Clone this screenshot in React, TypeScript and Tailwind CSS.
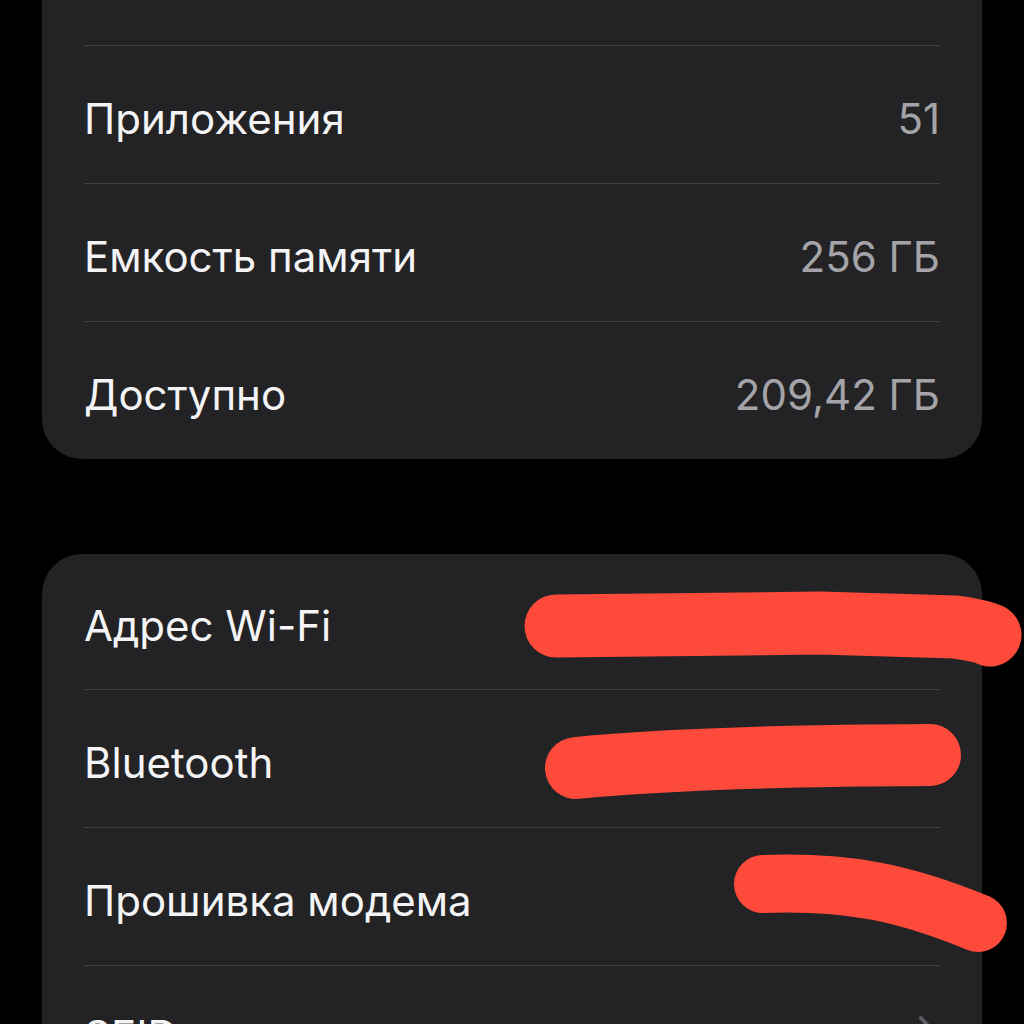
import React from "react";

const font = { fontFamily: "Inter, 'Noto Sans', 'Liberation Sans', sans-serif" };

type Row = { label: string; value?: string; chevron?: boolean };

const storage: Row[] = [
  { label: "Приложения", value: "51" },
  { label: "Емкость памяти", value: "256 ГБ" },
  { label: "Доступно", value: "209,42 ГБ" },
];

const network: Row[] = [
  { label: "Адрес Wi-Fi" },
  { label: "Bluetooth" },
  { label: "Прошивка модема" },
  { label: "SEID", chevron: true },
];

const RowItem = ({ row, first }: { row: Row; first?: boolean }) => (
  <div
    className={
      first
        ? "flex h-[135px] items-center justify-between pt-[8px]"
        : row.chevron
          ? "flex h-[138px] items-center justify-between border-t border-[#424245] pt-[2px]"
          : "flex h-[138px] items-center justify-between border-t border-[#424245] pt-[8px]"
    }
  >
    <span className="text-[42px] leading-none text-[#f4f4f6]">{row.label}</span>
    {row.value && (
      <span className="text-[42px] leading-none text-[#a3a3a8]">{row.value}</span>
    )}
    {row.chevron && (
      <svg width="16" height="28" viewBox="0 0 16 28" className="mb-[14px] mr-[6px]">
        <path
          d="M3 3 L13 14 L3 25"
          fill="none"
          stroke="#5c5c60"
          strokeWidth="4"
          strokeLinecap="round"
          strokeLinejoin="round"
        />
      </svg>
    )}
  </div>
);

const App = () => {
  return (
    <div className="relative h-[1024px] w-[1024px] overflow-hidden bg-black" style={font}>
      <div className="mx-[42px] rounded-b-[40px] bg-[#232325] px-[42px]">
        <div className="h-[45px]" />
        {storage.map((r) => (
          <RowItem key={r.label} row={r} />
        ))}
      </div>

      <div className="mx-[42px] mt-[95px] rounded-t-[40px] bg-[#232325] px-[42px]">
        {network.map((r, i) => (
          <RowItem key={r.label} row={r} first={i === 0} />
        ))}
      </div>

      {/* red marker scribbles over hidden values */}
      <svg
        className="pointer-events-none absolute left-0 top-0"
        width="1024"
        height="1024"
        viewBox="0 0 1024 1024"
      >
        <g fill="none" stroke="#fd4a3b" strokeLinecap="round" strokeLinejoin="round">
          <path d="M556 626 L820 623 L955 627 Q984 631 990 635" strokeWidth="63" />
          <path d="M576 768 Q700 756 930 755" strokeWidth="62" />
          <path d="M763 884 C850 881 905 893 978 923" strokeWidth="58" />
        </g>
      </svg>
    </div>
  );
};

export default App;
